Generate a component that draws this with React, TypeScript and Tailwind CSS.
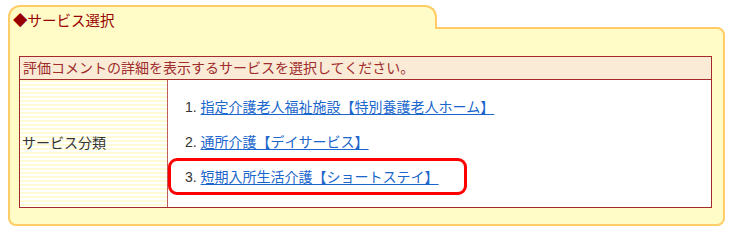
const services = [
  "指定介護老人福祉施設【特別養護老人ホーム】",
  "通所介護【デイサービス】",
  "短期入所生活介護【ショートステイ】",
];

export default function App() {
  return (
    <div
      className="relative w-[734px] h-[236px] bg-white pt-[5px] pl-[8px] text-[14px]"
      style={{ fontFamily: '"Liberation Sans", "Noto Sans CJK JP", sans-serif' }}
    >
      <div className="w-[717px]">
        {/* tab */}
        <div className="relative z-10 -mb-[2px] flex h-[24px] w-[429px] items-center rounded-t-[12px] border-2 border-b-0 border-[#ffcc66] bg-[#fffcc8] pl-[3px] pt-[8px] text-[14.5px] text-[#990000]">
          ◆サービス選択
        </div>

        {/* panel */}
        <div className="h-[199px] rounded-b-[8px] rounded-tr-[8px] border-2 border-[#ffcc66] bg-[#fffcc8] pl-[9px] pr-[11px] pt-[27px]">
          <div className="border border-[#a52a2a] bg-white">
            <div className="flex h-[23px] items-center border-b border-[#a52a2a] bg-[#faebd7] pl-[3px] text-[#a02c2c]">
              評価コメントの詳細を表示するサービスを選択してください。
            </div>
            <div className="flex h-[127px]">
              <div className="flex w-[148px] items-center border-r border-[#b85c5c] bg-[repeating-linear-gradient(to_bottom,#fffbd4_0px,#fffbd4_2px,#ffffff_2px,#ffffff_4px)] pl-[2px] text-[#333333]">
                サービス分類
              </div>
              <div className="flex-1 pl-[17px] pt-[10px]">
                {services.map((s, i) => (
                  <div key={s} className="h-[35px] leading-[35px] text-[#333333]">
                    {i + 1}.{" "}
                    <a href="#" className="text-[#1a66cc] underline underline-offset-2">
                      {s}
                    </a>
                  </div>
                ))}
              </div>
            </div>
          </div>
        </div>
      </div>

      {/* highlight */}
      <div className="absolute left-[168px] top-[158px] h-[37px] w-[299px] rounded-[9px] border-[3px] border-[#ff0000]" />
    </div>
  );
}
